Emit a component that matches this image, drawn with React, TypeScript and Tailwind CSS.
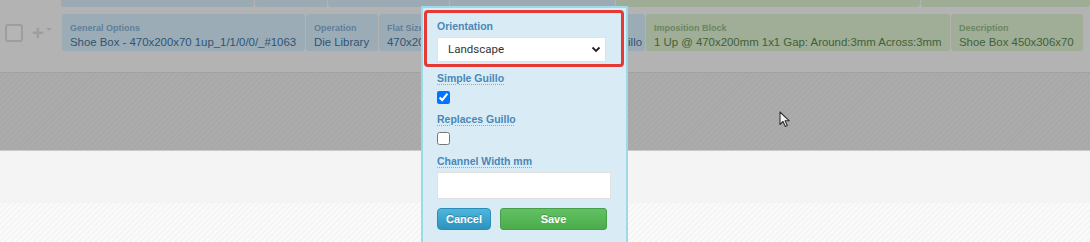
import React from 'react'

const font = { fontFamily: '"Liberation Sans", Arial, sans-serif' }

type Cell = { label: string; value: string; w: string; green?: boolean; right?: boolean }

const cells: Cell[] = [
  { label: 'General Options', value: 'Shoe Box - 470x200x70 1up_1/1/0/0/_#1063', w: 'w-[243px]' },
  { label: 'Operation', value: 'Die Library', w: 'w-[72px]' },
  { label: 'Flat Size', value: '470x200', w: 'w-[91px]' },
  { label: 'Guillo', value: 'Simple Guillo', w: 'w-[174px]', right: true },
  { label: 'Imposition Block', value: '1 Up @ 470x200mm 1x1 Gap: Around:3mm Across:3mm', w: 'w-[304px]', green: true },
  { label: 'Description', value: 'Shoe Box 450x306x70', w: 'w-[132px]', green: true },
]

function RowCell({ c }: { c: Cell }) {
  return (
    <div
      className={`flex ${c.w} shrink-0 flex-col overflow-hidden whitespace-nowrap rounded-[3px] pl-[8px] pt-[9px] ${
        c.right ? 'pr-[3px]' : ''
      } ${c.green ? 'bg-[#a0ad97]' : 'bg-[#9cacb7]'}`}
    >
      <div className={`text-[9px] font-bold leading-[11px] ${c.green ? 'text-[#6a8660]' : 'text-[#5f7f98]'}`}>
        {c.label}
      </div>
      <div
        className={`mt-[1px] text-[11.4px] leading-[14px] ${c.right ? 'self-end' : ''} ${
          c.green ? 'text-[#3f6236]' : 'text-[#2f5474]'
        }`}
      >
        {c.value}
      </div>
    </div>
  )
}

function Label({ children, plain }: { children: React.ReactNode; plain?: boolean }) {
  return (
    <div className="text-[10.5px] font-bold leading-[12px] text-[#4a87b6]">
      <span className={plain ? '' : 'underline decoration-[#7fb0d0] decoration-dotted underline-offset-2'}>
        {children}
      </span>
    </div>
  )
}

export default function App() {
  return (
    <div className="relative h-[242px] w-[1090px] overflow-hidden" style={font}>
      {/* overlaid table rows */}
      <div className="flex h-[72px] flex-col bg-[#b3b3b3]">
        <div className="flex h-[7px] gap-px pl-[61px]">
          <div className="w-[194px] rounded-b-[3px] bg-[#9caab3]" />
          <div className="w-[72px] rounded-b-[3px] bg-[#9caab3]" />
          <div className="w-[122px] rounded-b-[3px] bg-[#9caab3]" />
          <div className="w-[166px] rounded-b-[3px] bg-[#9caab3]" />
          <div className="w-[305px] rounded-b-[3px] bg-[#a0ad96]" />
          <div className="w-[170px] rounded-b-[3px] bg-[#a0ad96]" />
        </div>
        <div className="mt-[7px] flex h-[37px]">
          <div className="flex w-[62px] shrink-0 items-center">
            <div className="ml-[5px] h-[18px] w-[18px] rounded-[3px] border-2 border-[#9d9d9d] bg-[#b5b5b5]" />
            <div className="ml-[9px] text-[20px] font-bold leading-none text-[#9d9d9d]">+</div>
            <div className="ml-[2px] mt-[-6px] h-0 w-0 border-x-[3px] border-t-[3px] border-x-transparent border-t-[#9d9d9d]" />
          </div>
          <div className="flex gap-px">
            {cells.map((c) => (
              <RowCell key={c.label} c={c} />
            ))}
          </div>
        </div>
      </div>

      <div className="h-[78px] border-t border-[#a2a2a2] bg-[#ababab] bg-[repeating-linear-gradient(135deg,#ababab_0px,#ababab_2px,#a6a6a6_3px,#ababab_4px)]" />
      <div className="h-[53px] border-t border-[#c9c9c9] bg-[#f4f4f4]" />
      <div className="h-[40px] bg-[#f9f9f9] bg-[repeating-linear-gradient(135deg,#fafafa_0px,#fafafa_2px,#f1f1f1_3px,#fafafa_4px)]" />

      {/* popup editor */}
      <div className="absolute left-[421px] top-[6px] h-[260px] w-[207px] border-2 border-[#9ed9e9] bg-[#d9ecf6]">
        <div className="ml-px mr-[2px] mt-[2px] h-[57px] rounded-[4px] border-[3px] border-[#e53935] pl-[10px] pt-[7px]">
          <Label plain>Orientation</Label>
          <div className="mt-[5px] flex h-[25px] w-[169px] items-center justify-between border border-[#e2e2e2] bg-white pl-[10px] pr-[4px]">
            <span className="text-[11.5px] text-[#333]" style={{ fontFamily: 'Roboto, "Liberation Sans", sans-serif' }}>
              Landscape
            </span>
            <svg width="10" height="7" viewBox="0 0 10 7">
              <path d="M1.5 1.5 L5 5 L8.5 1.5" fill="none" stroke="#222" strokeWidth="1.8" />
            </svg>
          </div>
        </div>

        <div className="pl-[14px]">
          <div className="mt-[5px]">
            <Label>Simple Guillo</Label>
          </div>
          <input type="checkbox" defaultChecked className="mt-[7px] block h-[13px] w-[13px]" />
          <div className="mt-[9px]">
            <Label>Replaces Guillo</Label>
          </div>
          <input type="checkbox" className="mt-[7px] block h-[13px] w-[13px]" />
          <div className="mt-[10px]">
            <Label>Channel Width mm</Label>
          </div>
          <div className="mt-[5px] h-[27px] w-[174px] border border-[#e0e0e0] bg-white" />
          <div className="mt-[9px] flex gap-[9px]">
            <button className="h-[22px] w-[54px] rounded-[4px] border border-[#2a8db6] bg-[linear-gradient(#4fb6dc,#2b93bf)] text-[11px] font-bold text-white [text-shadow:0_-1px_0_rgba(0,0,0,0.25)]">
              Cancel
            </button>
            <button className="h-[22px] w-[107px] rounded-[3px] border border-[#479e47] bg-[linear-gradient(#62c162,#4cac4c)] text-[11px] font-bold text-white [text-shadow:0_-1px_0_rgba(0,0,0,0.2)]">
              Save
            </button>
          </div>
        </div>
      </div>

      {/* mouse cursor */}
      <svg className="absolute left-[779px] top-[111px]" width="13" height="17" viewBox="0 0 13 17">
        <path d="M1 1 L1 13.5 L4 10.5 L6.3 15.5 L8.3 14.6 L6.1 9.8 L10.3 9.8 Z" fill="#f2f2f2" stroke="#333" strokeWidth="1.1" strokeLinejoin="round" />
      </svg>
    </div>
  )
}
